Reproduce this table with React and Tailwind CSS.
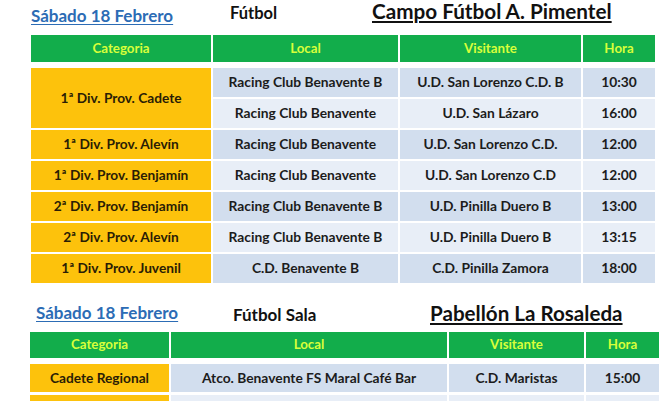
import React from "react";

const font = { fontFamily: "Lato, 'Open Sans', sans-serif" };

const rows1 = [
  ["Racing Club Benavente B", "U.D. San Lorenzo C.D. B", "10:30"],
  ["Racing Club Benavente", "U.D. San Lázaro", "16:00"],
  ["Racing Club Benavente", "U.D. San Lorenzo C.D.", "12:00"],
  ["Racing Club Benavente", "U.D. San Lorenzo C.D", "12:00"],
  ["Racing Club Benavente B", "U.D. Pinilla Duero B", "13:00"],
  ["Racing Club Benavente B", "U.D. Pinilla Duero B", "13:15"],
  ["C.D. Benavente B", "C.D. Pinilla Zamora", "18:00"],
];
const cats1 = [
  "1ª Div. Prov. Alevín",
  "1ª Div. Prov. Benjamín",
  "2ª Div. Prov. Benjamín",
  "2ª Div. Prov. Alevín",
  "1ª Div. Prov. Juvenil",
];

function Head({ children }) {
  return (
    <div className="bg-[#12ad4b] text-[#d8ff3a] font-bold text-[13.3px] flex items-center justify-center">
      {children}
    </div>
  );
}

function Cell({ children, odd }) {
  return (
    <div
      className={
        "flex items-center justify-center font-bold text-[13.8px] text-[#1c1c1c] " +
        (odd ? "bg-[#d2deee]" : "bg-[#e8eef7]")
      }
    >
      {children}
    </div>
  );
}

function Cat({ children, className = "" }) {
  return (
    <div
      className={
        "bg-[#fdc20c] flex items-center justify-center font-bold text-[13.7px] text-[#2a1d05] " +
        className
      }
    >
      {children}
    </div>
  );
}

export default function App() {
  return (
    <div className="w-[670px] h-[401px] bg-white overflow-hidden" style={font}>
      {/* title row 1 */}
      <div className="h-[35px] flex items-start pl-[31px]">
        <div className="w-[199px] shrink-0">
          <div className="mt-[7px] text-[17px] font-bold text-[#2c6cb5] underline underline-offset-2 leading-none whitespace-nowrap">
            Sábado 18 Febrero
          </div>
        </div>
        <div className="w-[142px] shrink-0">
          <div className="mt-[5px] text-[16.5px] font-bold text-[#111] leading-none whitespace-nowrap">
            Fútbol
          </div>
        </div>
        <div className="mt-[1px] text-[20.7px] font-bold text-[#111] underline underline-offset-2 leading-none whitespace-nowrap">
          Campo Fútbol A. Pimentel
        </div>
      </div>

      {/* table 1 */}
      <div className="ml-[31px] grid grid-cols-[180px_185px_181px_72px] gap-x-[2px]">
        <div className="h-[27px] grid"><Head>Categoria</Head></div>
        <div className="h-[27px] grid"><Head>Local</Head></div>
        <div className="h-[27px] grid"><Head>Visitante</Head></div>
        <div className="h-[27px] grid"><Head>Hora</Head></div>
      </div>
      <div className="ml-[31px] mt-[6px] grid grid-cols-[180px_185px_181px_72px] grid-rows-[repeat(7,29px)] gap-x-[2px] gap-y-[2px]">
        <Cat className="row-span-2">1ª Div. Prov. Cadete</Cat>
        <Cell odd>{rows1[0][0]}</Cell>
        <Cell odd>{rows1[0][1]}</Cell>
        <Cell odd>{rows1[0][2]}</Cell>
        <Cell>{rows1[1][0]}</Cell>
        <Cell>{rows1[1][1]}</Cell>
        <Cell>{rows1[1][2]}</Cell>
        {cats1.map((c, i) => {
          const r = rows1[i + 2];
          const odd = i % 2 === 0;
          return (
            <React.Fragment key={i}>
              <Cat>{c}</Cat>
              <Cell odd={odd}>{r[0]}</Cell>
              <Cell odd={odd}>{r[1]}</Cell>
              <Cell odd={odd}>{r[2]}</Cell>
            </React.Fragment>
          );
        })}
      </div>

      {/* title row 2 */}
      <div className="h-[49px] flex items-start pl-[36px]">
        <div className="w-[197px] shrink-0">
          <div className="mt-[21px] text-[17px] font-bold text-[#2c6cb5] underline underline-offset-2 leading-none whitespace-nowrap">
            Sábado 18 Febrero
          </div>
        </div>
        <div className="w-[197px] shrink-0">
          <div className="mt-[23px] text-[17px] font-bold text-[#111] leading-none whitespace-nowrap">
            Fútbol Sala
          </div>
        </div>
        <div className="mt-[20px] text-[20.6px] font-bold text-[#111] underline underline-offset-2 leading-none whitespace-nowrap">
          Pabellón La Rosaleda
        </div>
      </div>

      {/* table 2 */}
      <div className="ml-[30px] grid grid-cols-[139px_276px_135px_73px] gap-x-[2px]">
        <div className="h-[26px] grid"><Head>Categoria</Head></div>
        <div className="h-[26px] grid"><Head>Local</Head></div>
        <div className="h-[26px] grid"><Head>Visitante</Head></div>
        <div className="h-[26px] grid"><Head>Hora</Head></div>
      </div>
      <div className="ml-[30px] mt-[6px] grid grid-cols-[139px_276px_135px_73px] grid-rows-[repeat(2,28px)] gap-x-[2px] gap-y-[3px]">
        <Cat>Cadete Regional</Cat>
        <Cell odd>Atco. Benavente FS Maral Café Bar</Cell>
        <Cell odd>C.D. Maristas</Cell>
        <Cell odd>15:00</Cell>
        <Cat></Cat>
        <Cell></Cell>
        <Cell></Cell>
        <Cell></Cell>
      </div>
    </div>
  );
}
